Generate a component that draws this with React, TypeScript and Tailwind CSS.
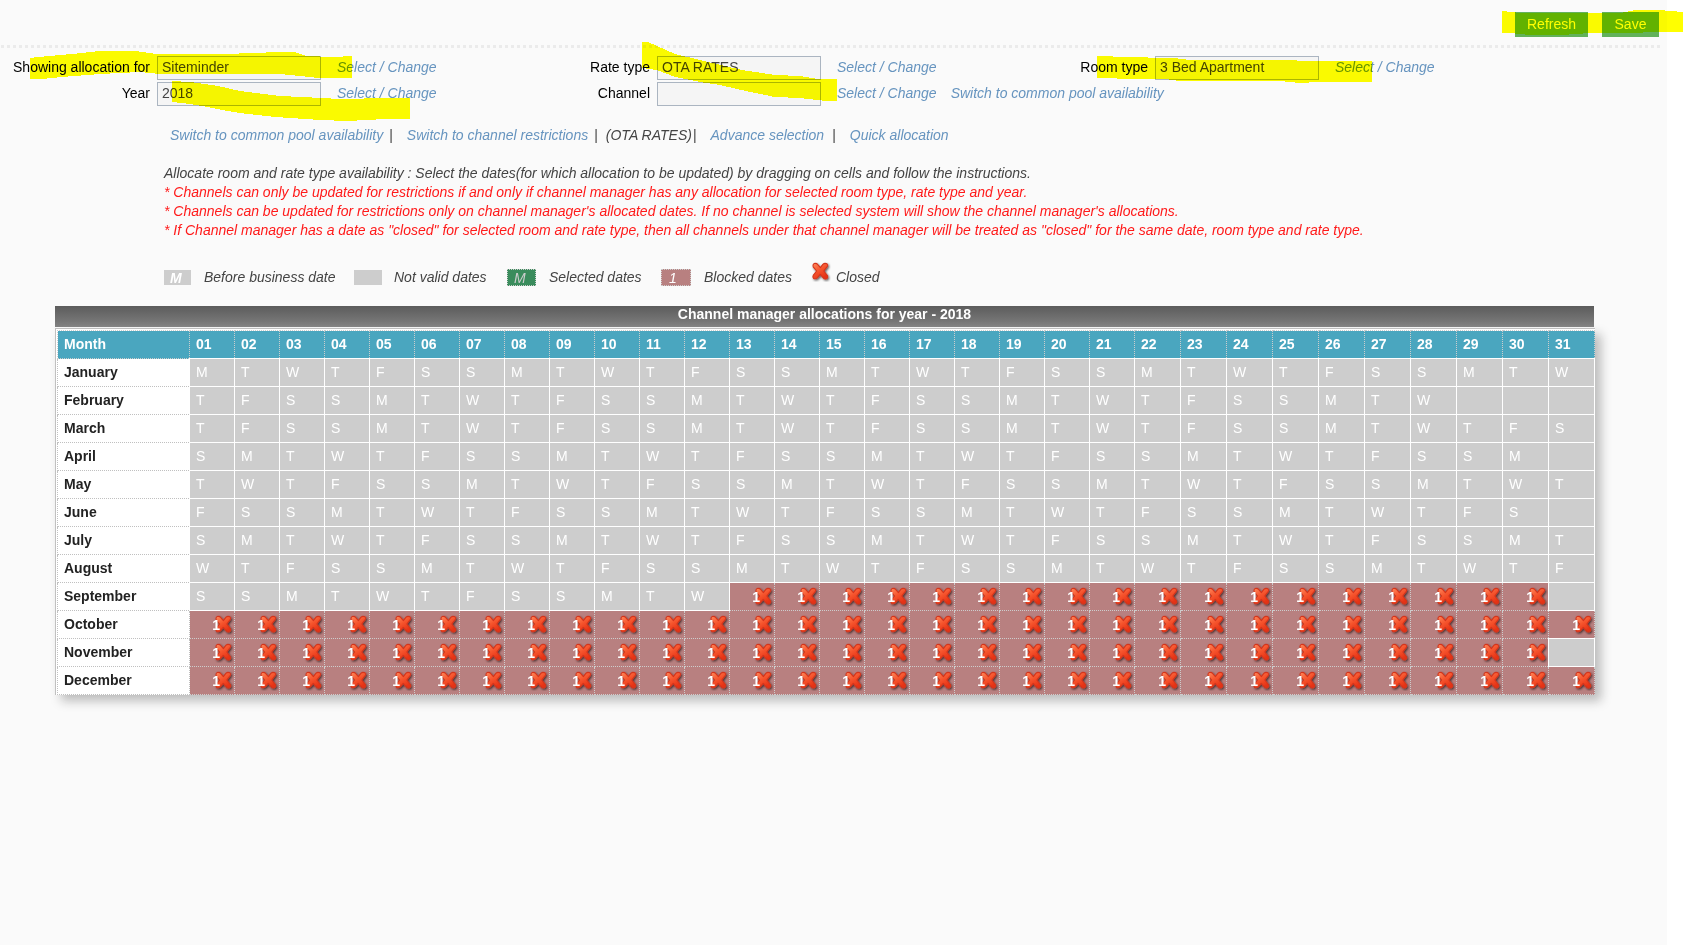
import React from "react";

const YEAR = 2018;
const DAYS = Array.from({ length: 31 }, (_, i) => i + 1);
const MONTHS = [
  "January",
  "February",
  "March",
  "April",
  "May",
  "June",
  "July",
  "August",
  "September",
  "October",
  "November",
  "December",
];

// First date that still accepts allocations
const BUSINESS_DATE = new Date(YEAR, 8, 13);

function ClosedIcon({ className }: { className?: string }) {
  return (
    <svg viewBox="0 0 20 20" className={className} aria-label="Closed">
      <defs>
        <linearGradient id="closedFill" x1="0" y1="0" x2="0.6" y2="1">
          <stop offset="0" stopColor="#ff8a5e" />
          <stop offset="0.5" stopColor="#f6552e" />
          <stop offset="1" stopColor="#e63214" />
        </linearGradient>
        <filter id="closedShadow" x="-20%" y="-20%" width="150%" height="150%">
          <feDropShadow dx="1" dy="1.2" stdDeviation="0.8" floodColor="#000" floodOpacity="0.65" />
        </filter>
      </defs>
      <path
        d="M3 1.6 Q5.4 0.8 6.8 2.6 L9.4 5.6 L11.8 2.4 Q13.6 0.6 16 1.8 Q17.4 3 16.2 4.6 L12.8 9 L16.4 13.6 Q17.2 15.8 15.4 16.8 Q13.4 17.4 12 15.6 L9.2 12.4 L6.4 15.8 Q4.6 17.4 2.6 16.4 Q1.2 15.2 2.2 13.4 L5.6 9 L2.2 4.8 Q1.4 2.6 3 1.6 Z"
        fill="url(#closedFill)"
        stroke="#d4361c"
        strokeWidth="1.1"
        strokeLinejoin="round"
        filter="url(#closedShadow)"
      />
    </svg>
  );
}

function SelectChange() {
  return (
    <a href="#" className="pb-0.5 whitespace-nowrap italic text-[#6694bf]">
      Select / Change
    </a>
  );
}

function Field({ id, label, value }: { id: string; label: string; value: string }) {
  return (
    <div className="flex h-6 items-center">
      <label htmlFor={id} className="w-[150px] shrink-0 pb-0.5 text-right whitespace-nowrap text-black">
        {label}
      </label>
      <input
        id={id}
        defaultValue={value}
        className="mr-4 ml-[7px] h-6 w-[164px] shrink-0 border border-[#abb5c1] bg-[#f5f5f5] px-1 pb-0.5 text-[#444]"
      />
      <SelectChange />
    </div>
  );
}

function Toolbar() {
  return (
    <div className="flex h-[45px] justify-end gap-[14px] pt-3 pr-2">
      <button className="h-[25px] w-[73px] bg-[#62b25a] pb-0.5 text-white">Refresh</button>
      <button className="h-[25px] w-[57px] bg-[#62b25a] pb-0.5 text-white">Save</button>
    </div>
  );
}

function Filters() {
  return (
    <div className="flex pt-2">
      <div className="flex w-[500px] flex-col gap-[2px]">
        <Field id="allocation" label="Showing allocation for" value="Siteminder" />
        <Field id="year" label="Year" value="2018" />
      </div>
      <div className="flex w-[498px] flex-col gap-[2px]">
        <Field id="rate" label="Rate type" value="OTA RATES" />
        <div className="flex items-center gap-[14px]">
          <Field id="channel" label="Channel" value="" />
          <a href="#" className="pb-0.5 whitespace-nowrap italic text-[#6694bf]">
            Switch to common pool availability
          </a>
        </div>
      </div>
      <Field id="room" label="Room type" value="3 Bed Apartment" />
    </div>
  );
}

function Actions() {
  return (
    <nav className="mt-[19px] ml-[170px] flex h-5 items-center whitespace-nowrap italic text-[#6694bf]">
      <a href="#">Switch to common pool availability</a>
      <span className="ml-1.5 text-[#444] not-italic">|</span>
      <a href="#" className="ml-[14px]">Switch to channel restrictions</a>
      <span className="ml-1.5 text-[#444] not-italic">|</span>
      <span className="ml-2 text-[#444]">(OTA RATES)</span>
      <span className="ml-px text-[#444] not-italic">|</span>
      <a href="#" className="ml-[14px]">Advance selection</a>
      <span className="ml-2 text-[#444] not-italic">|</span>
      <a href="#" className="ml-[14px]">Quick allocation</a>
    </nav>
  );
}

function Instructions() {
  return (
    <div className="mt-[19px] ml-[164px] leading-[19px] italic text-[#ff1a1a]">
      <p className="text-[#444]">
        Allocate room and rate type availability : Select the dates(for which allocation to be updated) by dragging on
        cells and follow the instructions.
      </p>
      <p>
        * Channels can only be updated for restrictions if and only if channel manager has any allocation for selected
        room type, rate type and year.
      </p>
      <p>
        * Channels can be updated for restrictions only on channel manager's allocated dates. If no channel is selected
        system will show the channel manager's allocations.
      </p>
      <p>
        * If Channel manager has a date as "closed" for selected room and rate type, then all channels under that
        channel manager will be treated as "closed" for the same date, room type and rate type.
      </p>
    </div>
  );
}

function Legend() {
  return (
    <div className="mt-[27px] ml-[164px] flex h-5 items-center whitespace-nowrap italic text-[#444]">
      <span className="mr-[13px] h-[15px] w-[27px] bg-[#cdcdcd] pl-[6px] leading-4 font-bold text-white">M</span>
      <span className="w-[150px]">Before business date</span>
      <span className="mr-3 h-[15px] w-7 bg-[#cdcdcd]" />
      <span className="w-[113px]">Not valid dates</span>
      <span className="mr-[13px] h-[17px] w-[29px] border border-dotted border-[#cdcdcd] bg-[#3a8c5c] pl-[6px] leading-4 text-[#cdcdcd]">
        M
      </span>
      <span className="w-[112px]">Selected dates</span>
      <span className="mr-[13px] h-[17px] w-[30px] border border-dotted border-[#cdcdcd] bg-[#b88080] pl-[7px] leading-4 text-white">
        1
      </span>
      <span className="w-[107px]">Blocked dates</span>
      <ClosedIcon className="mr-[5px] mb-2.5 h-5 w-5" />
      <span>Closed</span>
    </div>
  );
}

function DayCell({ month, day }: { month: number; day: number }) {
  const date = new Date(YEAR, month, day);
  if (date.getMonth() !== month) {
    return <td className="border border-solid border-white bg-[#cdcdcd]" />;
  }
  if (date < BUSINESS_DATE) {
    return (
      <td className="border border-solid border-white bg-[#cdcdcd] pb-0.5 pl-[6px] text-white">
        {"SMTWTFS"[date.getDay()]}
      </td>
    );
  }
  return (
    <td className="border border-dotted border-[#cdcdcd] bg-[#b88080] text-white">
      <div className="flex h-5 items-center justify-end">
        <span className="z-10 font-bold">1</span>
        <ClosedIcon className="-ml-1.5 h-5 w-5 shrink-0" />
      </div>
    </td>
  );
}

function AllocationTable() {
  return (
    <section className="mt-[19px] mr-[72px] ml-[55px]">
      <h2 className="mr-px h-[21px] bg-linear-to-b from-[#5c5c5c] to-[#808080] text-center leading-4 font-bold text-white">
        Channel manager allocations for year - {YEAR}
      </h2>
      <div className="mt-px border border-r-0 border-b-0 border-[#c0c0c0] bg-white pt-px pl-px shadow-[6px_6px_10px_#bbb]">
        <table className="w-full table-fixed border-collapse">
          <colgroup>
            <col className="w-[132px]" />
            {DAYS.map((d) => (
              <col key={d} className={d < 22 ? "w-[45px]" : "w-[46px]"} />
            ))}
          </colgroup>
          <thead>
            <tr className="h-7 bg-[#4aa6bf] text-left text-white">
              <th className="border border-dotted border-[#cdcdcd] pb-0.5 pl-[6px]">Month</th>
              {DAYS.map((d) => (
                <th key={d} className="border border-dotted border-[#cdcdcd] pb-0.5 pl-[6px]">
                  {String(d).padStart(2, "0")}
                </th>
              ))}
            </tr>
          </thead>
          <tbody>
            {MONTHS.map((name, m) => (
              <tr key={name} className="h-7">
                <th className="border border-dotted border-[#c0c0c0] bg-white pb-0.5 pl-[6px] text-left text-[#222]">
                  {name}
                </th>
                {DAYS.map((d) => (
                  <DayCell key={d} month={m} day={d} />
                ))}
              </tr>
            ))}
          </tbody>
        </table>
      </div>
    </section>
  );
}

// Marker strokes laid over the fields and buttons
function Highlights() {
  return (
    <svg
      width="1683"
      height="130"
      viewBox="0 0 1683 130"
      className="pointer-events-none absolute top-0 left-0 mix-blend-multiply"
      fill="#ffff00"
      shapeRendering="crispEdges"
      aria-hidden="true"
    >
      <path d="M30 58 L38 57 L72 54 L100 51 L135 51 L157 54 L226 54 L280 52 L294 52 L306 56 L333 57 L352 56 V78 H318 L300 76 L280 74 H160 L140 72 L100 74 L62 77 L42 79 H30 Z" />
      <path d="M172 81 L190 82 L218 86 L240 91 L280 96 L322 98 L340 99 L388 98 H410 V119 H385 L348 121 L320 120 L275 117 L240 113 L222 110 L202 106 L190 104 L172 102 Z" />
      <path d="M642 42 H648 L657 46 L675 54 L700 60 L725 66 L742 70 L775 75 L800 76 L818 79 H837 V101 H826 L800 98 L775 97 L750 92 L720 85 L700 82 L675 77 L657 70 L642 68 Z" />
      <path d="M1097 56 H1104 L1122 57 L1174 58 L1190 60 H1288 L1305 61 H1372 V82 H1318 L1300 83 L1280 81 H1180 L1165 79 L1130 79 L1103 78 H1097 Z" />
      <path d="M1502 11 L1520 13 H1620 L1630 11 L1636 10 H1659 L1683 12 V32 H1655 L1630 33 H1590 L1562 35 L1530 35 L1510 33 H1502 Z" />
    </svg>
  );
}

export default function App() {
  return (
    <div className="relative min-h-screen overflow-hidden bg-white pr-4 font-['Liberation_Sans',Arial,sans-serif] text-[14px] leading-5">
      <main className="min-h-screen bg-[#fafafa]">
        <Toolbar />
        <div className="mr-[5px] h-[3px] bg-[repeating-linear-gradient(90deg,transparent_0_1px,#ebebeb_1px_4px,transparent_4px_6px)]" />
        <Filters />
        <Actions />
        <Instructions />
        <Legend />
        <AllocationTable />
      </main>
      <Highlights />
    </div>
  );
}
